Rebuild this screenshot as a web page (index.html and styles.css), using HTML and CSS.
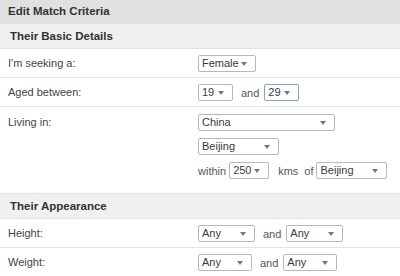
FILE: index.html
```html
<!DOCTYPE html>
<html lang="en">
<head>
<meta charset="UTF-8">
<title>Edit Match Criteria</title>
<link rel="stylesheet" href="styles.css">
</head>
<body>

<div class="panel">
    <h1>Edit Match Criteria</h1>

    <!-- Basic details -->
    <h2>Their Basic Details</h2>
    <div class="row">
        <div class="label">I'm seeking a:</div>
        <div class="field">
            <span class="sel w-female">Female<i></i></span>
        </div>
    </div>
    <div class="row">
        <div class="label">Aged between:</div>
        <div class="field">
            <span class="sel w-age">19<i></i></span>
            <span class="word">and</span>
            <span class="sel w-age focus">29<i></i></span>
        </div>
    </div>
    <div class="row last">
        <div class="label">Living in:</div>
        <div class="field stack">
            <div><span class="sel w-country">China<i></i></span></div>
            <div><span class="sel w-city">Beijing<i></i></span></div>
            <div class="line">
                <span class="word within">within</span>
                <span class="sel w-dist">250<i></i></span>
                <span class="word kms">kms</span>
                <span class="word of">of</span>
                <span class="sel w-of">Beijing<i></i></span>
            </div>
        </div>
    </div>

    <!-- Appearance -->
    <h2 class="gap">Their Appearance</h2>
    <div class="row">
        <div class="label">Height:</div>
        <div class="field">
            <span class="sel w-any">Any<i></i></span>
            <span class="word">and</span>
            <span class="sel w-any">Any<i></i></span>
        </div>
    </div>
    <div class="row">
        <div class="label">Weight:</div>
        <div class="field">
            <span class="sel w-any2">Any<i></i></span>
            <span class="word">and</span>
            <span class="sel w-any2">Any<i></i></span>
        </div>
    </div>
</div>

</body>
</html>
```

FILE: styles.css
```css
body {
    margin: 0;
    font-family: "Liberation Sans", Arial, sans-serif;
    background: #fff;
    color: #444;
}

.panel {
    width: 400px;
    overflow: hidden;
}

h1 {
    margin: 0;
    height: 24px;
    line-height: 22px;
    padding-left: 8px;
    font-size: 11.5px;
    font-weight: bold;
    color: #333;
    background: #e0e0e0;
}

h2 {
    margin: 0;
    height: 24px;
    line-height: 24px;
    padding-left: 10px;
    font-size: 11.5px;
    font-weight: bold;
    color: #333;
    background: #f0f0f0;
    border-bottom: 1px solid #e2e2e2;
}

h2.gap {
    margin-top: 9px;
    border-top: 1px solid #e2e2e2;
}

.row {
    display: flex;
    padding: 6px 0 5px;
    border-bottom: 1px solid #e2e2e2;
}
.row.last {
    border-bottom: none;
    padding-top: 7px;
}

.label {
    width: 190px;
    padding-left: 8px;
    font-size: 11px;
    line-height: 17px;
}

.field {
    display: flex;
    align-items: center;
    font-size: 11px;
}

.field.stack {
    flex-direction: column;
    align-items: flex-start;
    gap: 7px;
}

.line {
    display: flex;
    align-items: center;
}

.word {
    margin: 0 5px 0 8px;
    color: #555;
}
.line .within { margin-left: 0; margin-right: 3px; }
.line .kms { margin-left: 9px; margin-right: 6px; }
.line .of { margin-left: 0; margin-right: 3px; }

.sel {
    position: relative;
    display: block;
    box-sizing: border-box;
    height: 17px;
    line-height: 15px;
    padding-left: 3px;
    border: 1px solid #b8b8b8;
    border-radius: 2px;
    background: #fff;
    font-size: 11px;
    color: #3a3a3a;
}
.sel.focus { border-color: #7fa4d6; }

/* dropdown arrow */
.sel i {
    position: absolute;
    right: 8px;
    top: 6px;
    width: 0;
    height: 0;
    border-left: 3.5px solid transparent;
    border-right: 3.5px solid transparent;
    border-top: 4px solid #777;
}

.w-female { width: 58px; }
.w-age { width: 35px; }
.w-country { width: 137px; }
.w-city { width: 81px; }
.w-dist { width: 40px; }
.w-of { width: 71px; }
.w-any { width: 57px; }
.w-any2 { width: 54px; }
```
